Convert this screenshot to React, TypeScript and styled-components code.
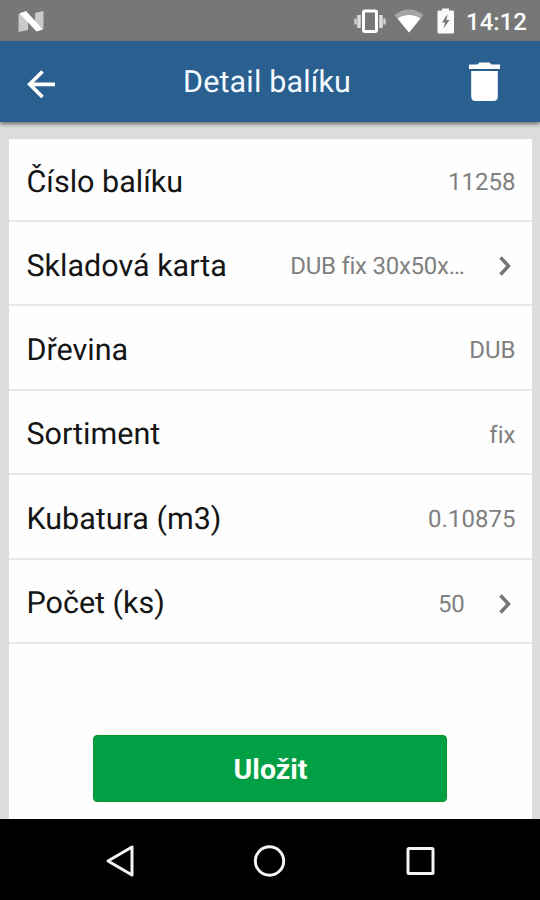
import React from 'react';
import styled, { createGlobalStyle } from 'styled-components';

const GlobalStyle = createGlobalStyle`
  * { box-sizing: border-box; }
  body { margin: 0; background: #dcdcdc; }
`;

const Screen = styled.div`
  width: 540px;
  height: 900px;
  display: flex;
  flex-direction: column;
  overflow: hidden;
  background: #dcdcdc;
  font-family: Roboto, 'Noto Sans', sans-serif;
  text-rendering: geometricPrecision;
`;

const StatusBar = styled.div`
  height: 41px;
  flex: none;
  display: flex;
  align-items: center;
  justify-content: space-between;
  padding: 0 13px 0 17px;
  background: #777777;
  color: #fafafa;
`;

const StatusIcons = styled.div`
  display: flex;
  align-items: center;
  svg { display: block; }
`;

const Clock = styled.span`
  width: 61px;
  margin-left: 11px;
  padding-top: 3px;
  font-size: 24px;
  font-weight: 500;
  line-height: 38px;
  white-space: nowrap;
`;

const Header = styled.header`
  height: 81px;
  flex: none;
  display: grid;
  grid-template-columns: 84px 1fr 84px;
  align-items: center;
  background: #29608f;
  box-shadow: 0 2px 4px rgba(0, 0, 0, 0.5);
  z-index: 1;
`;

const Title = styled.h1`
  margin: 0;
  padding: 2px 6px 0 0;
  color: #f3f9ff;
  font-size: 30.5px;
  font-weight: 400;
  line-height: 79px;
  letter-spacing: 0.15px;
  text-align: center;
`;

const IconButton = styled.button`
  height: 81px;
  padding: 0;
  border: 0;
  background: none;
  svg { display: block; }
`;

const Card = styled.main`
  flex: 1;
  margin: 17px 8.5px 0;
  display: flex;
  flex-direction: column;
  background: #fefefe;
`;

const Row = styled.div`
  height: 84.4px;
  display: flex;
  align-items: center;
  padding: 3px 16px 0 18px;
  border-bottom: 2px solid #e8e8e8;
  &:first-child { height: 83px; padding-top: 2px; }
`;

const Label = styled.span`
  flex: 1;
  color: #151515;
  font-size: 30.5px;
  line-height: 36px;
  padding-top: 4px;
`;

const Value = styled.span<{ $tight?: boolean }>`
  color: #808080;
  font-size: 24px;
  line-height: 30px;
  letter-spacing: ${(p) => (p.$tight ? '-0.25px' : '0.02px')};
  padding-top: 2.6px;
`;

const Chevron = styled.svg`
  display: block;
  width: 20px;
  height: 24px;
  margin: 2.6px 1.5px 0 29.5px;
`;

const SaveButton = styled.button`
  width: 354px;
  height: 67px;
  margin: auto auto 17px 84.5px;
  padding: 2px 0 0 1px;
  border: 1px solid #079525;
  border-radius: 4px;
  background: #02a045;
  color: #fafffa;
  font: 700 28.5px/60px Roboto, sans-serif;
`;

const NavBar = styled.nav`
  height: 81px;
  flex: none;
  display: grid;
  grid-template-columns: repeat(3, 151px);
  justify-content: center;
  align-items: center;
  background: #000;
  svg { display: block; margin: 2px auto 0; }
`;

interface Field {
  label: string;
  value: string;
  link?: boolean;
}

const fields: Field[] = [
  { label: 'Číslo balíku', value: '11258' },
  { label: 'Skladová karta', value: 'DUB fix 30x50x…', link: true },
  { label: 'Dřevina', value: 'DUB' },
  { label: 'Sortiment', value: 'fix' },
  { label: 'Kubatura (m3)', value: '0.10875' },
  { label: 'Počet (ks)', value: '50', link: true },
];

const AndroidLogo = () => (
  <svg width="28" height="24" viewBox="0 0 28 24">
    <path d="M1.500 5.500 5 3l6 6v12l-9.500 2zM26.500 2v18L18 14V4z" fill="#c9c9c9" />
    <path d="M2.500 4.500 9 2 26 20.500 19.500 22.500z" fill="#fff" />
  </svg>
);

const VibrateIcon = () => (
  <svg width="32" height="26" viewBox="0 0 32 26">
    <rect x="9.500" y="3" width="13" height="20.500" rx="1.500" fill="none" stroke="#fff" strokeWidth="3" />
    <path d="M5 7v13M27 7v13" stroke="#dcdcdc" strokeWidth="3.500" />
    <path d="M1.500 10.500v6M30.500 10.500v6" stroke="#d0d0d0" strokeWidth="2.500" />
  </svg>
);

const WifiIcon = () => (
  <svg width="30" height="24" viewBox="0 0 30 24">
    <path d="M0.500 6C9 -1.500 21 -1.500 29.500 6L15 23.500z" fill="#a6a6a6" />
    <path d="M3.500 9.500C10 4.800 20 4.800 26.500 9.500L15 23.500z" fill="#fff" />
  </svg>
);

const BatteryIcon = () => (
  <svg width="18" height="26" viewBox="0 0 18 26">
    <path d="M1.500 2.500H5V0.500h7v2h3.500q1.500 0 1.500 1.500v20.500q0 1-1 1H1.500q-1 0-1-1V4q0-1.500 1-1.500z" fill="#fafafa" />
    <path d="M10.500 6 5 14.500h3L6.500 20.500l6-8.500H9.500z" fill="#777" />
  </svg>
);

export default function App() {
  return (
    <>
      <GlobalStyle />
      <Screen>
        <StatusBar>
          <AndroidLogo />
          <StatusIcons>
            <VibrateIcon />
            <svg width="8" height="1" />
            <WifiIcon />
            <svg width="13" height="1" />
            <BatteryIcon />
            <Clock>14:12</Clock>
          </StatusIcons>
        </StatusBar>
        <Header>
          <IconButton aria-label="Zpět">
            <svg width="84" height="81" viewBox="0 0 84 81">
              <path d="M55 43.300H30M42.500 30.500 29.700 43.300 42.500 56" fill="none" stroke="#fff" strokeWidth="3.700" />
            </svg>
          </IconButton>
          <Title>Detail balíku</Title>
          <IconButton aria-label="Smazat">
            <svg width="84" height="81" viewBox="0 0 84 81">
              <path d="M13 23.500h8.500l2-2h10l2 2H44v4.500H13z" fill="#fff" />
              <path d="M15.200 30h26.600v25.500q0 4.500-4.500 4.500h-17.600q-4.500 0-4.500-4.500z" fill="#fff" />
            </svg>
          </IconButton>
        </Header>
        <Card>
          {fields.map((f) => (
            <Row key={f.label}>
              <Label>{f.label}</Label>
              <Value $tight={f.link}>{f.value}</Value>
              {f.link && (
                <Chevron viewBox="0 0 20 24">
                  <path d="M6.500 3.500 14.500 12 6.500 20.500" fill="none" stroke="#747474" strokeWidth="3.400" />
                </Chevron>
              )}
            </Row>
          ))}
          <SaveButton>Uložit</SaveButton>
        </Card>
        <NavBar>
          <svg width="40" height="40" viewBox="0 0 40 40">
            <path d="M33 6v28L9 20z" fill="none" stroke="#f4f4f4" strokeWidth="3" strokeLinejoin="round" />
          </svg>
          <svg width="40" height="40" viewBox="0 0 40 40">
            <circle cx="19.500" cy="20" r="14.200" fill="none" stroke="#f4f4f4" strokeWidth="3" />
          </svg>
          <svg width="40" height="40" viewBox="0 0 40 40">
            <rect x="7" y="7.500" width="25" height="25" rx="1" fill="none" stroke="#f4f4f4" strokeWidth="3" />
          </svg>
        </NavBar>
      </Screen>
    </>
  );
}
